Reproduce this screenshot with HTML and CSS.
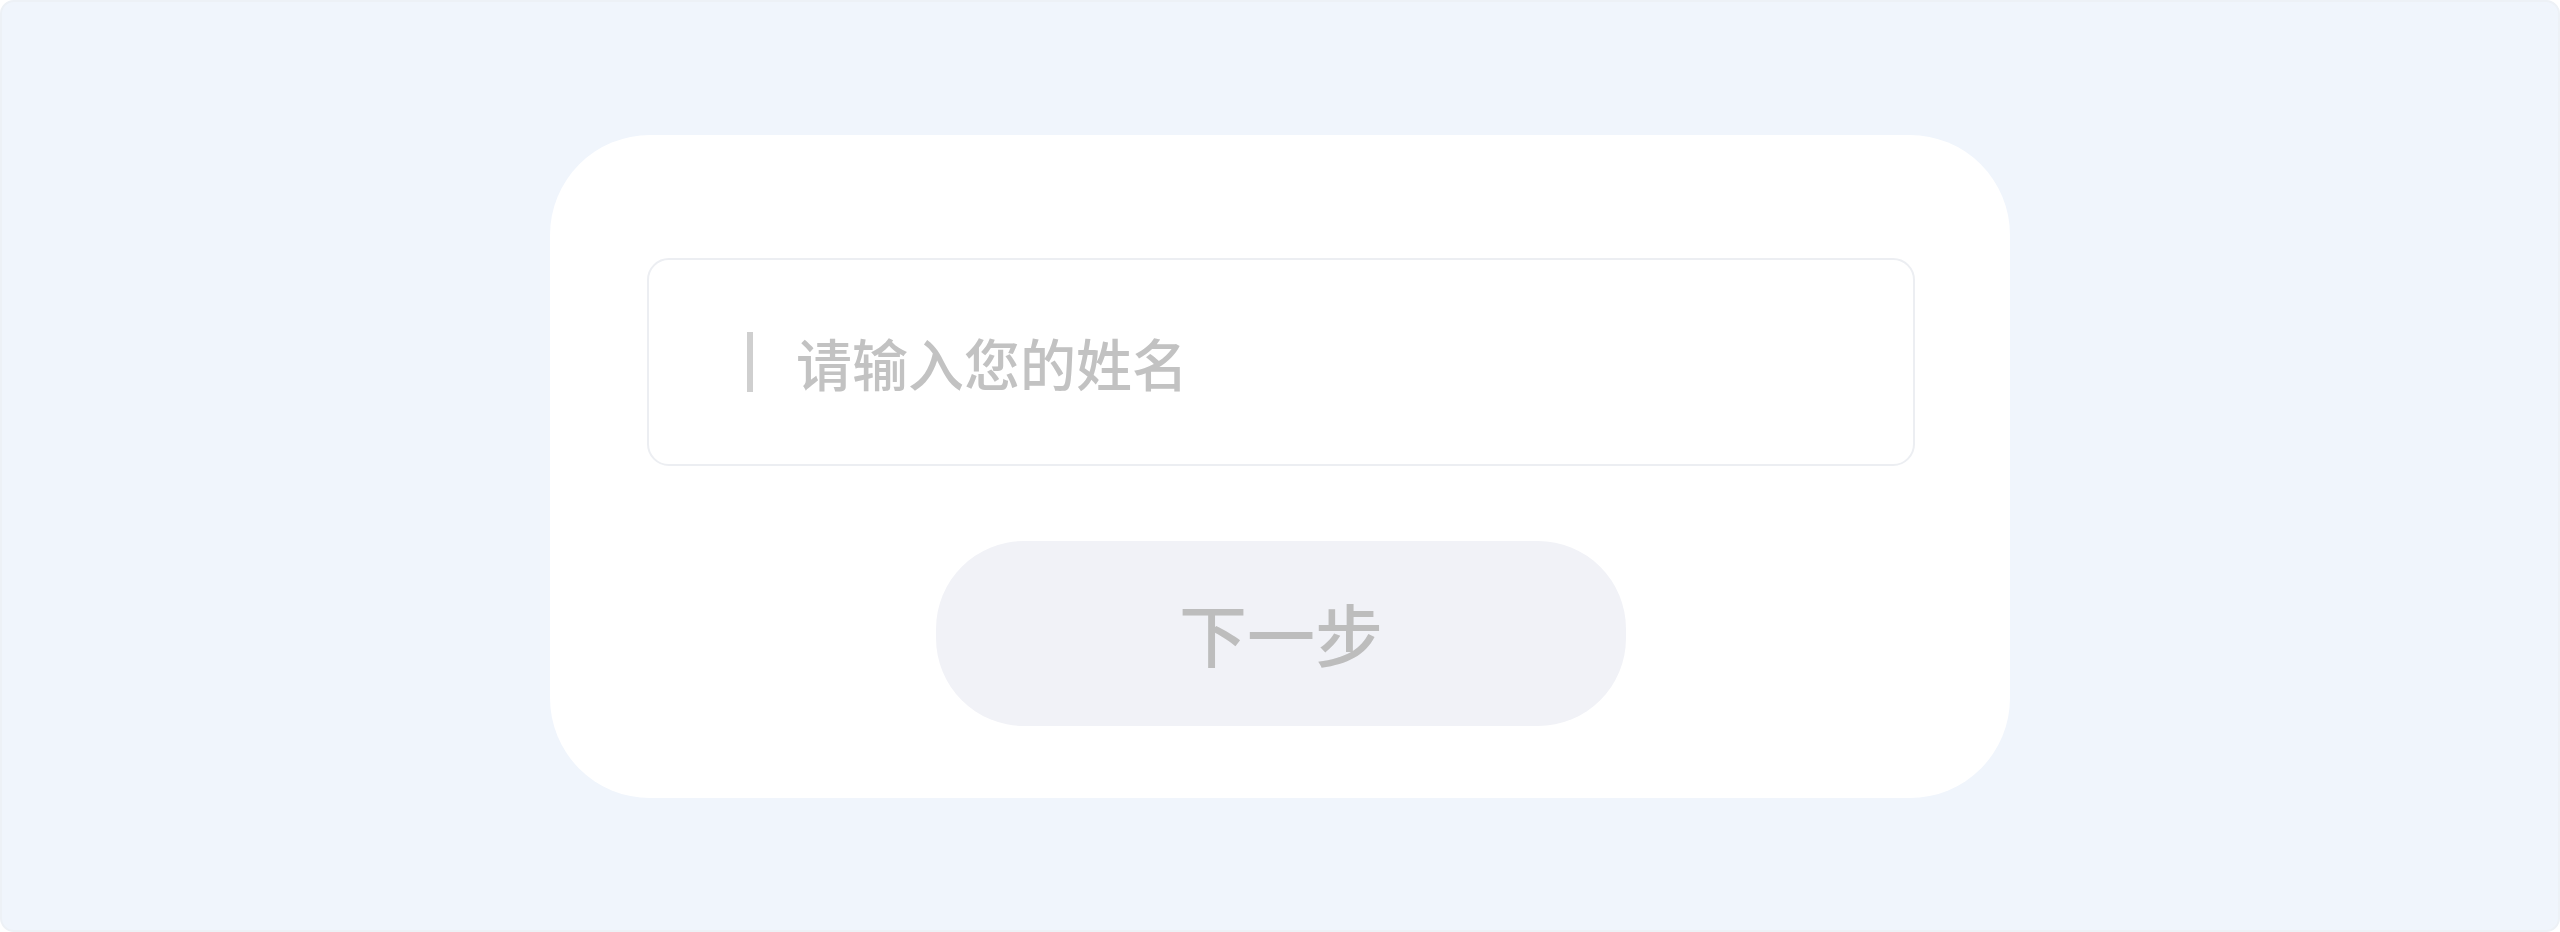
FILE: index.html
```html
<!DOCTYPE html>
<html lang="zh-CN">
<head>
<meta charset="utf-8">
<title>请输入您的姓名</title>
<link rel="stylesheet" href="styles.css">
</head>
<body>
<div class="page">
  <div class="card">
    <div class="field">
      <span class="caret"></span>
      <span class="placeholder">请输入您的姓名</span>
    </div>
    <div class="actions">
      <button class="next" type="button">下一步</button>
    </div>
  </div>
</div>
</body>
</html>
```
FILE: styles.css
```css
html, body {
  margin: 0;
  padding: 0;
  width: 2560px;
  height: 932px;
  background: #ffffff;
  overflow: hidden;
}
body {
  font-family: "Noto Sans CJK SC", "Noto Sans", sans-serif;
}
.page {
  box-sizing: border-box;
  width: 2560px;
  height: 932px;
  background: #f0f5fc;
  border: 2px solid #edf1f6;
  border-radius: 14px;
  display: flex;
  align-items: center;
  justify-content: center;
}
.card {
  box-sizing: border-box;
  width: 1460px;
  background: #ffffff;
  border-radius: 100px;
  padding: 123px 95px 72px 97px;
  display: flex;
  flex-direction: column;
}
.field {
  box-sizing: border-box;
  height: 208px;
  border: 2px solid #eceef2;
  border-radius: 22px;
  display: flex;
  align-items: center;
  padding-left: 98px;
  gap: 43px;
}
.caret {
  width: 6px;
  height: 60px;
  background: #cfcfcf;
  flex: none;
}
.placeholder {
  font-size: 56px;
  font-weight: 500;
  line-height: 1;
  color: #c2c2c2;
}
.actions {
  display: flex;
  justify-content: center;
  margin-top: 75px;
}
.next {
  width: 690px;
  height: 185px;
  border: none;
  border-radius: 88px;
  background: #f1f2f7;
  color: #bdbdbd;
  font-family: "Noto Sans CJK SC", "Noto Sans", sans-serif;
  font-size: 68px;
  font-weight: 500;
  line-height: 1;
  padding: 0;
  cursor: pointer;
}
```
